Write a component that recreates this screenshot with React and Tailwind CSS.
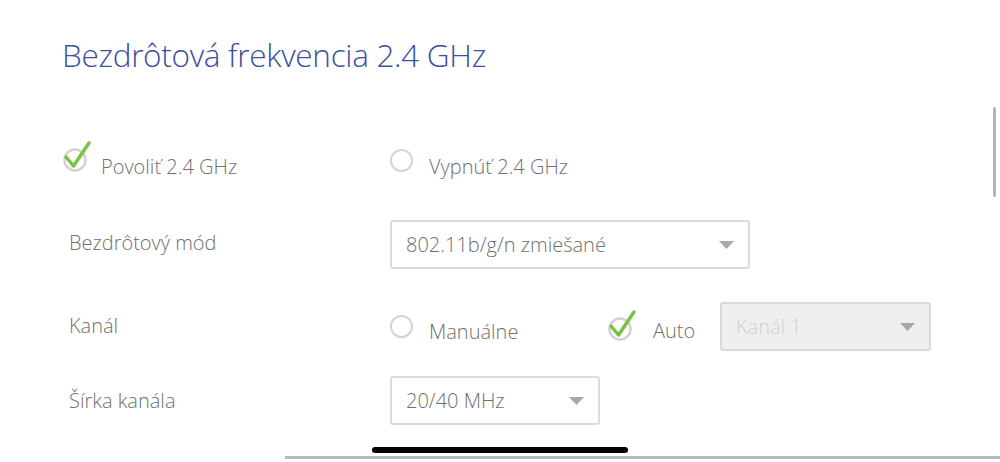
import React from "react";

function CheckedMark() {
  return (
    <svg width="30" height="34" viewBox="0 0 30 34" className="shrink-0">
      <circle cx="13" cy="20" r="10.5" fill="none" stroke="#d2d2d2" strokeWidth="2.5" />
      <path d="M4 17 L11.5 26 L27 3" fill="none" stroke="#7cc242" strokeWidth="3.5" strokeLinecap="round" strokeLinejoin="round" />
    </svg>
  );
}

function Radio() {
  return <span className="block w-[23px] h-[23px] rounded-full border-[2.5px] border-[#d4d4d4] shrink-0" />;
}

function Arrow({ color = "#a8a8a8" }) {
  return (
    <svg width="15" height="8" viewBox="0 0 15 8" className="shrink-0">
      <path d="M0 0 H15 L7.5 8 Z" fill={color} />
    </svg>
  );
}

function Select({ value, width, disabled }) {
  return (
    <div
      className={
        "flex items-center justify-between h-[49px] rounded-[3px] border-2 pl-[14px] pr-[14px] " +
        (disabled ? "bg-[#efefef] border-[#d9d9d9] text-[#cfcfcf]" : "bg-white border-[#dcdcdc] text-[#6f6f6f]")
      }
      style={{ width }}
    >
      <span>{value}</span>
      <Arrow />
    </div>
  );
}

export default function App() {
  return (
    <div
      className="relative w-[1000px] h-[462px] overflow-hidden bg-white text-[20px] text-[#707070] font-light"
      style={{ fontFamily: '"Open Sans", "Noto Sans", sans-serif' }}
    >
      <h1 className="pl-[62px] pt-[30px] text-[31.5px] leading-[49px] text-[#3b4f9f] font-light tracking-[-0.3px]">
        Bezdrôtová frekvencia 2.4 GHz
      </h1>

      {/* Povoliť / Vypnúť */}
      <div className="flex items-center h-[50px] mt-[55px] pl-[62px]">
        <div className="flex items-center w-[328px]">
          <div className="-mt-[4px]">
            <CheckedMark />
          </div>
          <span className="ml-[9px] mt-[15px]">Povoliť 2.4 GHz</span>
        </div>
        <div className="flex items-center mt-[2px]">
          <Radio />
          <span className="ml-[16px] mt-[13px]">Vypnúť 2.4 GHz</span>
        </div>
      </div>

      {/* Bezdrôtový mód */}
      <div className="flex items-center h-[49px] mt-[36px] pl-[69px]">
        <span className="w-[321px] -mt-[4px]">Bezdrôtový mód</span>
        <Select value="802.11b/g/n zmiešané" width={360} />
      </div>

      {/* Kanál */}
      <div className="flex items-center h-[49px] mt-[33px] pl-[69px]">
        <span className="w-[321px] -mt-[2px]">Kanál</span>
        <div className="flex items-center w-[217px]">
          <Radio />
          <span className="ml-[16px] mt-[10px]">Manuálne</span>
        </div>
        <div className="flex items-center w-[113px] -mt-[2px]">
          <CheckedMark />
          <span className="ml-[16px] mt-[10px]">Auto</span>
        </div>
        <Select value="Kanál 1" width={211} disabled />
      </div>

      {/* Šírka kanála */}
      <div className="flex items-center h-[49px] mt-[25px] pl-[69px]">
        <span className="w-[321px]">Šírka kanála</span>
        <Select value="20/40 MHz" width={210} />
      </div>

      {/* scrollbars / home indicator overlays */}
      <div className="absolute right-[4px] top-[107px] w-[3px] h-[90px] rounded-full bg-[#b5b5b5]" />
      <div className="absolute left-[285px] right-0 top-[456px] h-[3px] bg-[#b8b8b8]" />
      <div className="absolute left-[372px] top-[447px] w-[256px] h-[6px] rounded-full bg-black" />
    </div>
  );
}
